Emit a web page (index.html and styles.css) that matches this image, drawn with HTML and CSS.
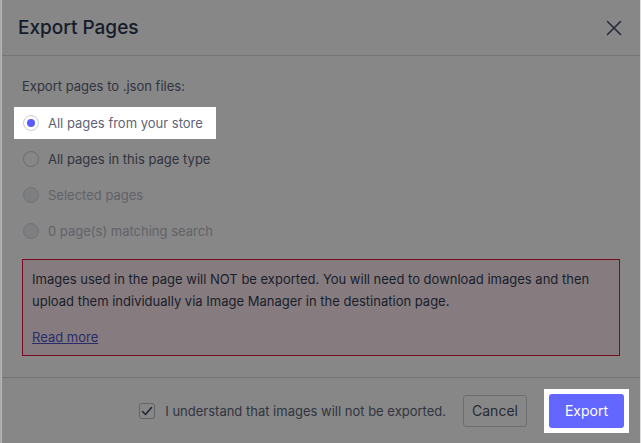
FILE: index.html
```html
<!DOCTYPE html>
<html>
<head>
<meta charset="utf-8">
<link rel="stylesheet" href="styles.css">
</head>
<body>
<div class="modal">
  <header class="modal-header">
    <h1 class="modal-title">Export Pages</h1>
    <button class="close-btn" aria-label="Close">
      <svg width="16" height="16" viewBox="0 0 16 16"><path d="M1.5 1.5 L14.5 14.5 M14.5 1.5 L1.5 14.5" stroke="currentColor" stroke-width="1.6" stroke-linecap="round" fill="none"/></svg>
    </button>
  </header>
  <main class="modal-body">
    <p class="intro">Export pages to .json files:</p>
    <div class="options">
      <label class="option spotlight">
        <span class="radio checked"></span>
        <span class="option-label">All pages from your store</span>
      </label>
      <label class="option">
        <span class="radio"></span>
        <span class="option-label">All pages in this page type</span>
      </label>
      <label class="option disabled">
        <span class="radio"></span>
        <span class="option-label">Selected pages</span>
      </label>
      <label class="option disabled">
        <span class="radio"></span>
        <span class="option-label">0 page(s) matching search</span>
      </label>
    </div>
    <div class="alert">
      <p>Images used in the page will NOT be exported. You will need to download images and then upload them individually via Image Manager in the destination page.</p>
      <a class="read-more" href="#">Read more</a>
    </div>
  </main>
  <footer class="modal-footer">
    <label class="confirm">
      <span class="checkbox">
        <svg width="12" height="12" viewBox="0 0 12 12"><path d="M1.5 6.5 L4.5 9.5 L10.5 2.5" stroke="currentColor" stroke-width="1.6" fill="none" stroke-linecap="round" stroke-linejoin="round"/></svg>
      </span>
      <span>I understand that images will not be exported.</span>
    </label>
    <button class="btn btn-secondary">Cancel</button>
    <div class="spotlight spot-btn">
      <button class="btn btn-primary">Export</button>
    </div>
  </footer>
  <div class="overlay"></div>
</div>
</body>
</html>
```

FILE: styles.css
```css
* { box-sizing: border-box; }
html, body {
  margin: 0;
  padding: 0;
  height: 100%;
}
body {
  background: #a8a8a8;
  font-family: "Inter", "Liberation Sans", sans-serif;
  color: #5e6478;
  overflow: hidden;
}
.modal {
  position: relative;
  margin-left: 1px;
  height: 443px;
  background: #ffffff;
  border-left: 1px solid #b8b8b8;
  border-right: 1px solid #dedede;
  display: flex;
  flex-direction: column;
}
.modal-header {
  height: 56px;
  display: flex;
  align-items: center;
  justify-content: space-between;
  padding: 0 18px 0 16px;
  border-bottom: 1px solid #d9dbe2;
}
.modal-title {
  margin: 0;
  font-size: 19px;
  font-weight: 500;
  color: #2c3550;
}
.close-btn {
  border: 0;
  background: none;
  padding: 0;
  color: #4a5166;
  display: flex;
  margin-top: 1px;
}
.modal-body {
  flex: 1;
  padding: 22px 20px 21px 20px;
}
.intro {
  margin: 0 0 11px 0;
  font-size: 13px;
  color: #5e6478;
}
.options {
  display: flex;
  flex-direction: column;
}
.option {
  display: flex;
  align-items: center;
  height: 36px;
  font-size: 13px;
  color: #5e6478;
}
.option .radio {
  width: 16px;
  height: 16px;
  border-radius: 50%;
  border: 1px solid #c9ccd6;
  background: #fff;
  margin: 0 9px 0 1px;
  display: flex;
  align-items: center;
  justify-content: center;
}
.option .radio.checked::after {
  content: "";
  width: 8px;
  height: 8px;
  border-radius: 50%;
  background: #5b5cff;
}
.option.disabled .radio {
  background: #eef0f3;
  border-color: #d7dae2;
}
.option.disabled .option-label {
  color: #b7bbc6;
}
.spotlight {
  position: relative;
  z-index: 2;
  background: #fff;
}
.option.spotlight {
  align-self: flex-start;
  margin-left: -8px;
  padding: 0 13px 0 8px;
  height: 32px;
  margin-top: 2px;
  margin-bottom: 2px;
}
.alert {
  margin-top: 10px;
  border: 1px solid #e0123f;
  background: #fdebf0;
  padding: 8px 9px 7px 9px;
  font-size: 13px;
  line-height: 22px;
  color: #343b53;
}
.alert p {
  margin: 0 0 14px 0;
}
.read-more {
  color: #4f52c9;
  text-decoration: underline;
}
.modal-footer {
  height: 66px;
  border-top: 1px solid #d9dbe2;
  display: flex;
  align-items: center;
  justify-content: flex-end;
  padding: 0 11px 0 20px;
}
.confirm {
  display: flex;
  align-items: center;
  font-size: 13px;
  color: #5e6478;
  margin-right: 17px;
}
.checkbox {
  width: 16px;
  height: 16px;
  border: 1px solid #b9bdc8;
  border-radius: 3px;
  display: flex;
  align-items: center;
  justify-content: center;
  color: #3d4560;
  margin-right: 10px;
}
.btn {
  font-family: inherit;
  font-size: 14px;
  height: 32px;
  border-radius: 3px;
  padding: 0 16px;
}
.btn-secondary {
  background: #fff;
  border: 1px solid #cdd0d8;
  color: #4a5166;
  width: 64px;
  padding: 0;
}
.spot-btn {
  margin-left: 17px;
  padding: 5px;
  display: flex;
}
.btn-primary {
  background: #6366ff;
  border: 0;
  color: #fff;
  width: 75px;
  height: 34px;
  padding: 0;
}
.overlay {
  position: absolute;
  inset: 0;
  background: rgba(0, 0, 0, 0.47);
  z-index: 1;
  pointer-events: none;
}
```
